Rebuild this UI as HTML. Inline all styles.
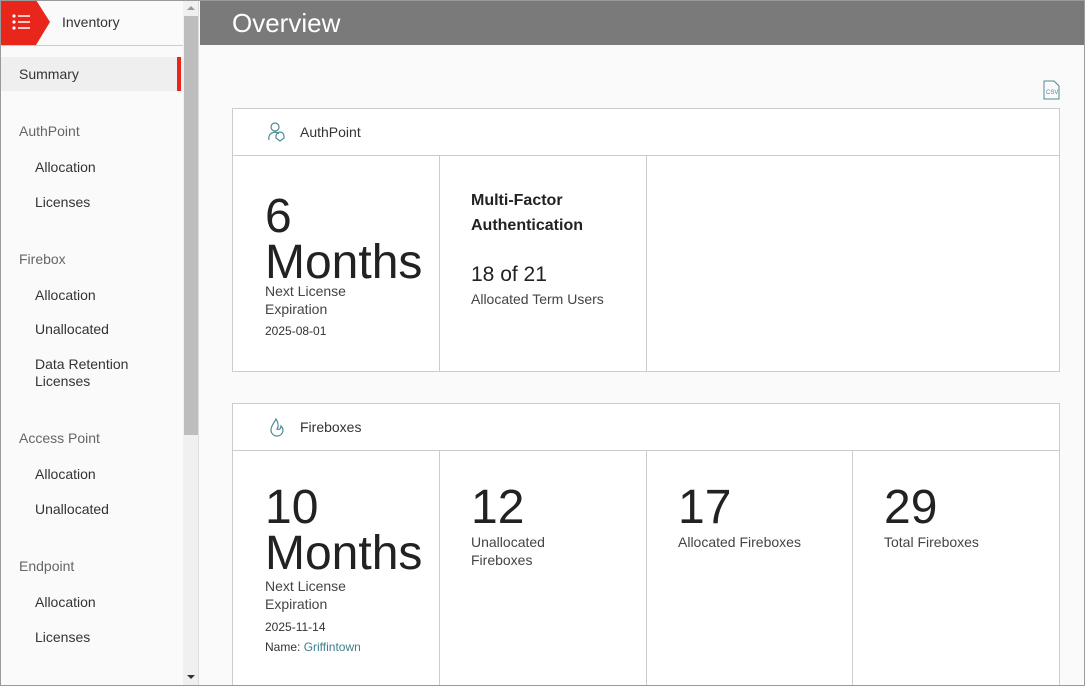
<!DOCTYPE html>
<html style="overflow:hidden;height:686px"><head><style>
*{box-sizing:border-box;margin:0;padding:0}
body{width:1085px;height:686px;overflow:hidden;font-family:"Liberation Sans",sans-serif;background:#fafafa;position:relative;color:#333}
.frame{position:absolute;inset:0;border:1px solid #9a9a9a;pointer-events:none;z-index:10}
.side{position:absolute;left:0;top:0;width:183px;height:686px;background:#fafafa}
.top{height:46px;border-bottom:1px solid #ccc;position:relative}
.flag{position:absolute;left:0;top:0;width:50px;height:45px;background:#e8261c;clip-path:polygon(0 0,36px 0,50px 22px,36px 45px,0 45px)}
.top .t{position:absolute;left:62px;top:14px;font-size:14px;color:#333}
.side a{display:block;position:absolute;font-size:14px;color:#333}
.sum{position:absolute;left:0;top:57px;width:183px;height:34px;background:#efefef}
.sum i{position:absolute;right:2px;top:0;width:4px;height:34px;background:#e8261c}
.grp{color:#666!important}
.sb{position:absolute;left:183px;top:0;width:16px;height:686px;background:#f0f0f0;border-right:1px solid #ddd}
.thumb{position:absolute;left:1px;top:16px;width:14px;height:419px;background:#bdbdbd}
.hdr{position:absolute;left:200px;top:0;right:0;height:45px;background:#7a7a7a;color:#fff;font-size:26px;padding:8px 32px}
.card{position:absolute;left:232px;width:828px;background:#fff;border:1px solid #ccc}
.ch{height:47px;border-bottom:1px solid #ccc;position:relative;font-size:14px}
.ch span{position:absolute;left:67px;top:15px}
.ch svg{position:absolute;left:33px;top:12px}
.cell{position:absolute;top:47px;bottom:0;border-right:1px solid #ccc}
.big{font-size:48px;line-height:46px;color:#222}
.lbl{font-size:14px;color:#444;line-height:18px}
.sm{font-size:12px;color:#333}
</style></head><body>
<div class="frame"></div>
<div class="side">
 <div class="top"><div class="flag"><svg width="30" height="45" style="position:absolute;left:10px;top:0"><g fill="#fff"><circle cx="4" cy="16" r="1.6"/><circle cx="4" cy="22" r="1.6"/><circle cx="4" cy="28" r="1.6"/></g><g stroke="#fff" stroke-width="1.6"><line x1="8" y1="16" x2="20" y2="16"/><line x1="8" y1="22" x2="20" y2="22"/><line x1="8" y1="28" x2="20" y2="28"/></g></svg></div><div class="t">Inventory</div></div>
 <div class="sum"><i></i></div>
 <a style="left:19px;top:66px">Summary</a>
 <a class="grp" style="left:19px;top:123px">AuthPoint</a>
 <a style="left:35px;top:159px">Allocation</a>
 <a style="left:35px;top:194px">Licenses</a>
 <a class="grp" style="left:19px;top:251px">Firebox</a>
 <a style="left:35px;top:287px">Allocation</a>
 <a style="left:35px;top:321px">Unallocated</a>
 <a style="left:35px;top:356px;line-height:17px">Data Retention<br>Licenses</a>
 <a class="grp" style="left:19px;top:430px">Access Point</a>
 <a style="left:35px;top:466px">Allocation</a>
 <a style="left:35px;top:501px">Unallocated</a>
 <a class="grp" style="left:19px;top:558px">Endpoint</a>
 <a style="left:35px;top:594px">Allocation</a>
 <a style="left:35px;top:629px">Licenses</a>
</div>
<div class="sb"><div class="thumb"></div>
 <div style="position:absolute;left:4px;top:6px;border:4px solid transparent;border-bottom:4px solid #999;border-top:0"></div>
 <div style="position:absolute;left:4px;top:675px;border:4px solid transparent;border-top:4px solid #333;border-bottom:0"></div>
</div>
<div class="hdr">Overview</div>
<svg style="position:absolute;left:1043px;top:79px" width="18" height="22"><path d="M1 2h10l5 5v13H1z" fill="none" stroke="#4d8a94" stroke-width="1"/><text x="3" y="15" font-size="6" fill="#4d8a94" font-family="Liberation Sans">CSV</text></svg>

<div class="card" style="top:108px;height:264px">
 <div class="ch"><svg width="24" height="22"><circle cx="9" cy="6" r="4" fill="none" stroke="#4d8a94" stroke-width="1.2"/><path d="M3 19a6 6 0 0 1 10-6 M10 15a4 4 0 0 1 8 0v2l-4 3-4-3z" fill="none" stroke="#4d8a94" stroke-width="1.2"/></svg><span>AuthPoint</span></div>
 <div class="cell" style="left:0;width:207px">
  <div class="big" style="position:absolute;left:32px;top:38px">6<br>Months</div>
  <div class="lbl" style="position:absolute;left:32px;top:126px">Next License<br>Expiration</div>
  <div class="sm" style="position:absolute;left:32px;top:168px">2025-08-01</div>
 </div>
 <div class="cell" style="left:207px;width:207px">
  <div style="position:absolute;left:31px;top:32px;font-size:16px;font-weight:bold;line-height:25px;color:#222">Multi-Factor<br>Authentication</div>
  <div style="position:absolute;left:31px;top:107px;font-size:21px;color:#222">18 of 21</div>
  <div class="lbl" style="position:absolute;left:31px;top:134px">Allocated Term Users</div>
 </div>
</div>

<div class="card" style="top:403px;height:283px;border-bottom:0">
 <div class="ch"><svg width="24" height="24"><path d="M10 3c-2 4-5 7-5 11a6 6 0 0 0 12 0c0-2-1-3-2-4 0 3-2 4-4 3 2-3 1-7-1-10z" fill="none" stroke="#4d8a94" stroke-width="1.2"/></svg><span>Fireboxes</span></div>
 <div class="cell" style="left:0;width:207px">
  <div class="big" style="position:absolute;left:32px;top:34px">10<br>Months</div>
  <div class="lbl" style="position:absolute;left:32px;top:126px">Next License<br>Expiration</div>
  <div class="sm" style="position:absolute;left:32px;top:169px">2025-11-14</div>
  <div class="sm" style="position:absolute;left:32px;top:189px">Name: <span style="color:#3f7f8a">Griffintown</span></div>
 </div>
 <div class="cell" style="left:207px;width:207px">
  <div class="big" style="position:absolute;left:31px;top:34px">12</div>
  <div class="lbl" style="position:absolute;left:31px;top:82px">Unallocated<br>Fireboxes</div>
 </div>
 <div class="cell" style="left:414px;width:206px">
  <div class="big" style="position:absolute;left:31px;top:34px">17</div>
  <div class="lbl" style="position:absolute;left:31px;top:82px">Allocated Fireboxes</div>
 </div>
 <div class="cell" style="left:620px;width:207px">
  <div class="big" style="position:absolute;left:31px;top:34px">29</div>
  <div class="lbl" style="position:absolute;left:31px;top:82px">Total Fireboxes</div>
 </div>
</div>
</body></html>
